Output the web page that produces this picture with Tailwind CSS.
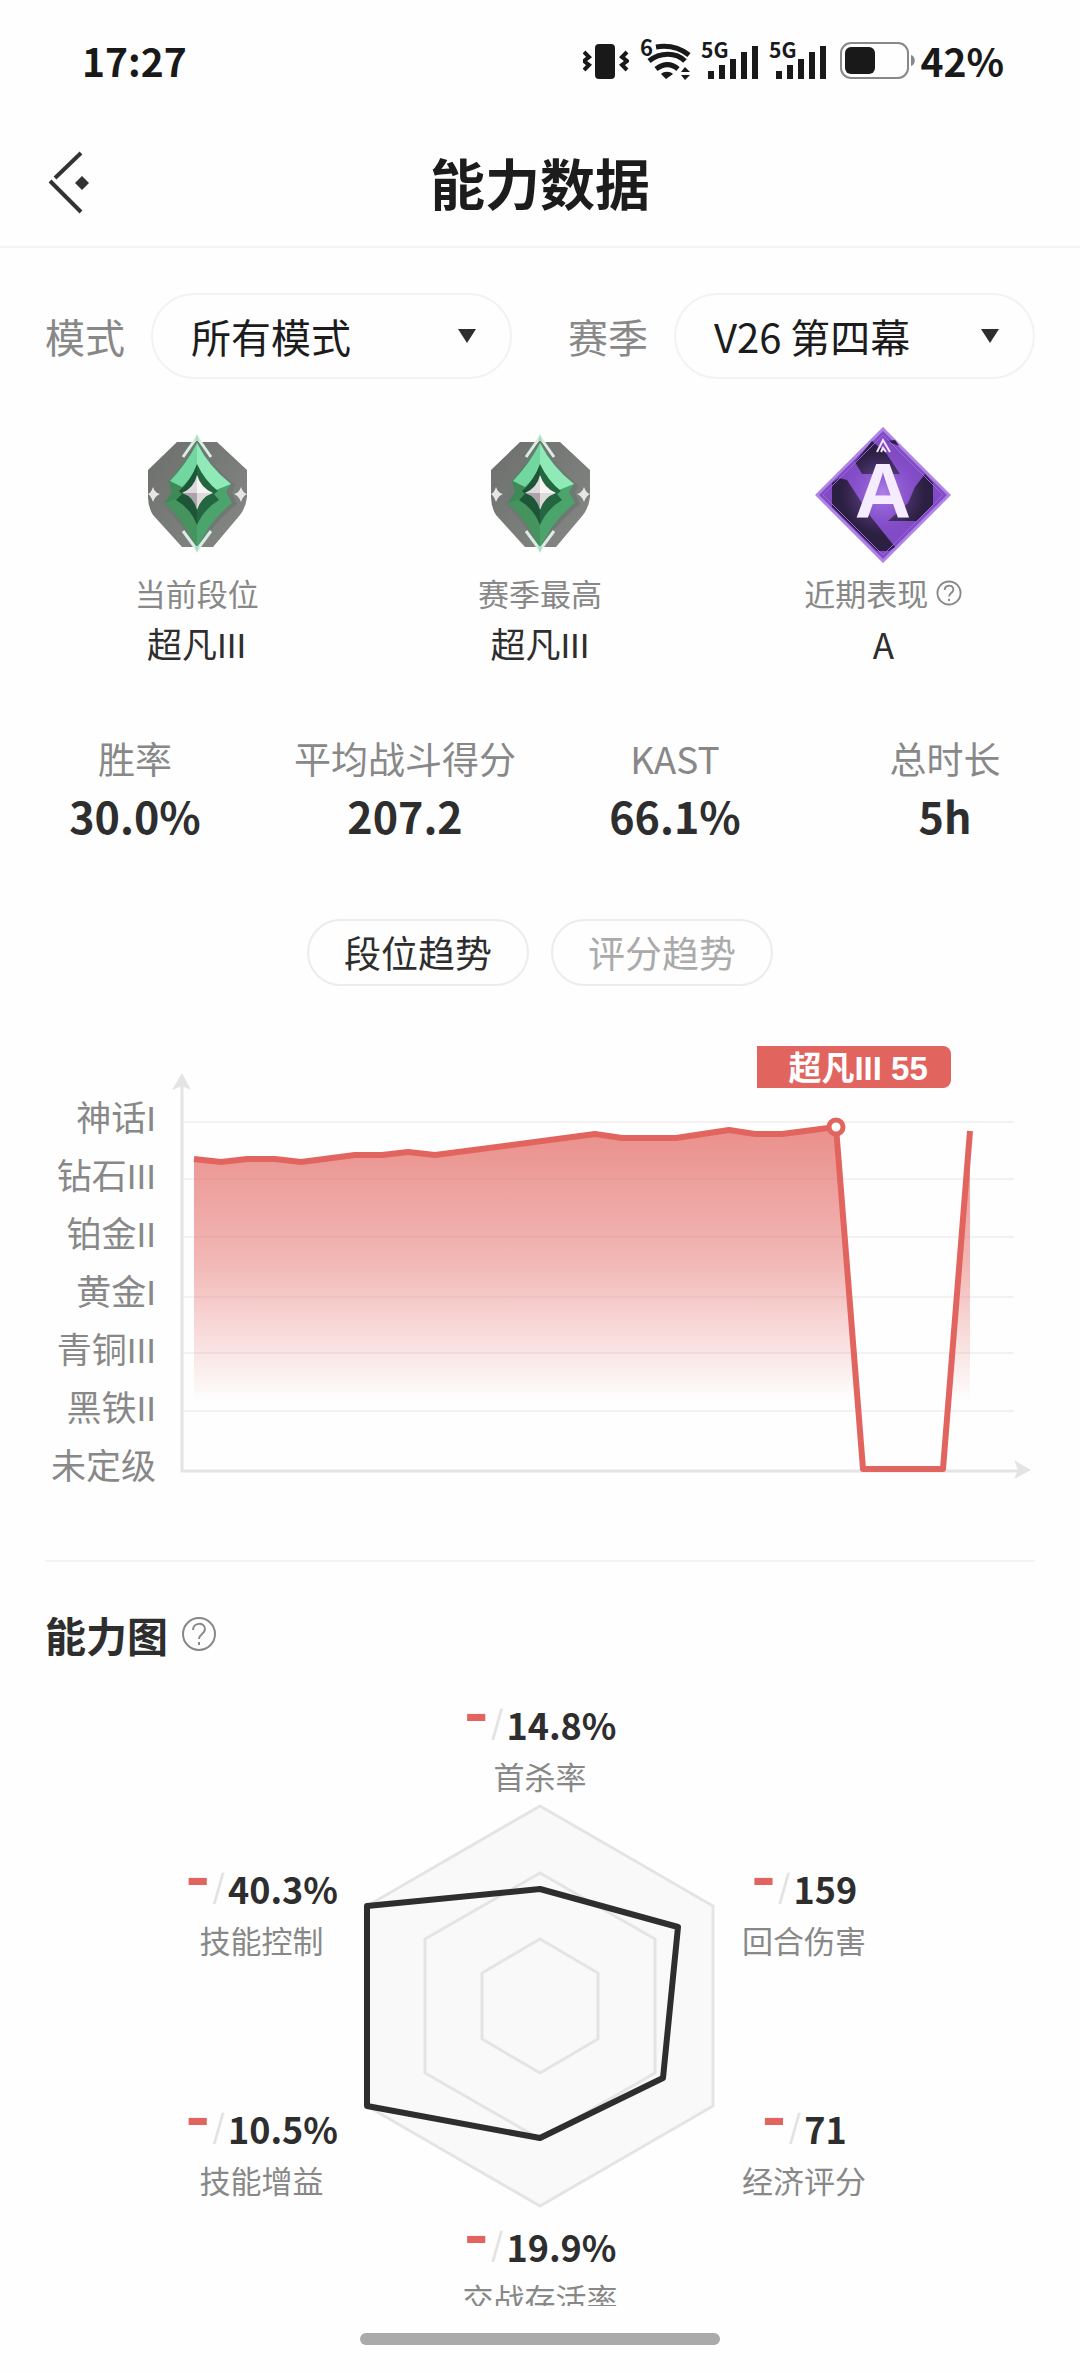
<!DOCTYPE html>
<html lang="zh-CN">

<head>
    <meta charset="UTF-8">
    <meta name="viewport" content="width=device-width, initial-scale=1.0">
    <title>能力数据</title>
    <script src="https://cdn.jsdelivr.net/npm/@tailwindcss/browser@4"></script>
</head>

<body class="h-screen flex flex-col bg-[#fefefe] text-[#2e2e2e] font-['Noto_Sans_CJK_SC',sans-serif]">
    <!-- Status bar -->
    <div class="h-[120px] shrink-0 pl-[82px] pr-[76px] flex items-center justify-between text-[#191919] text-[39px] font-bold">
        <div>17:27</div>
        <div class="flex items-center">
            <svg class="w-[46px] h-[44px] mr-[10px]" viewBox="587 38 46 44" fill="#191919">
                <rect x="599" y="44" width="20" height="35" rx="4" />
                <path d="M588 52l5 5-5 4 5 4-5 5M631 52l-5 5 5 4-5 4 5 5" fill="none" stroke="#191919" stroke-width="4" />
            </svg>
            <svg class="w-[52px] h-[60px] mr-[9px]" viewBox="642 30 52 60" fill="none" stroke="#191919" stroke-width="5">
                <text x="643" y="56" font-size="22" fill="#191919" stroke="none">6</text>
                <path d="M659 47c12-2 24 1 33 8M652 61c11-9 27-9 36 0M659 69c8-6 15-6 22 0" />
                <path d="M664 74c3-3 9-3 12 0l-7 5zM684 72l4-5 5 5zM684 75l4 5 5-5z" fill="#191919" stroke="none" />
            </svg>
            <svg class="w-[60px] h-[60px] mr-[8px]" viewBox="703 30 60 60" fill="#191919">
                <text x="704" y="58" font-size="21">5G</text>
                <path d="M711 71h6v8h-6zM722 65h6v14h-6zM733 59h6v20h-6zM744 52h6v27h-6zM755 46h6v33h-6z" />
            </svg>
            <svg class="w-[60px] h-[60px] mr-[12px]" viewBox="703 30 60 60" fill="#191919">
                <text x="704" y="58" font-size="21">5G</text>
                <path d="M711 71h6v8h-6zM722 65h6v14h-6zM733 59h6v20h-6zM744 52h6v27h-6zM755 46h6v33h-6z" />
            </svg>
            <svg class="w-[76px] h-[44px]" viewBox="844 38 76 44">
                <rect x="845" y="43" width="67" height="35" rx="10" fill="none" stroke="#888" stroke-width="2" />
                <rect x="849" y="47" width="30" height="27" rx="6" fill="#191919" />
                <path d="M915 55c5 1 5 10 0 11z" fill="#888" />
            </svg>
            <div class="ml-1">42%</div>
        </div>
    </div>

    <!-- Header -->
    <header class="h-[128px] shrink-0 px-[44px] grid grid-cols-[1fr_auto_1fr] items-center border-b-2 border-[#f5f5f5]">
        <button type="button" aria-label="返回" class="justify-self-start">
            <svg class="w-[48px] h-[64px]" viewBox="44 151 48 64" fill="none" stroke="#333" stroke-width="4">
                <path d="M81 153L55 178M50 181L81 212" />
                <path d="M82 176l7 7-7 7-7-7z" fill="#333" stroke="none" />
            </svg>
        </button>
        <h1 class="pb-1 text-[55px] font-bold text-[#1c1c1c]">能力数据</h1>
    </header>

    <main class="flex-1 min-h-0 overflow-y-auto [scrollbar-width:none] pt-[45px]">
        <!-- Filters -->
        <div class="flex gap-14 px-[45px] text-[40px]">
            <div class="flex-1 flex items-center gap-[26px]">
                <label for="mode" class="text-[#888]">模式</label>
                <div class="relative flex-1">
                    <select id="mode" class="appearance-none w-full h-[86px] pl-[38px] rounded-full border-2 border-[#f2f2f2] text-[#1c1c1c]">
                        <option>所有模式</option>
                    </select>
                    <svg class="absolute right-[36px] top-[36px] w-[18px] h-[14px] pointer-events-none" viewBox="0 0 18 14">
                        <path d="M0 0h18L9 14z" fill="#2e2e2e" />
                    </svg>
                </div>
            </div>
            <div class="flex-1 flex items-center gap-[26px]">
                <label for="season" class="text-[#888]">赛季</label>
                <div class="relative flex-1">
                    <select id="season" class="appearance-none w-full h-[86px] pl-[38px] rounded-full border-2 border-[#f2f2f2] text-[#1c1c1c]">
                        <option>V26 第四幕</option>
                    </select>
                    <svg class="absolute right-[36px] top-[36px] w-[18px] h-[14px] pointer-events-none" viewBox="0 0 18 14">
                        <path d="M0 0h18L9 14z" fill="#2e2e2e" />
                    </svg>
                </div>
            </div>
        </div>

        <!-- Ranks -->
        <div class="mt-12 px-[25px] grid grid-cols-3 text-center">
            <div>
                <svg class="w-[136px] h-[136px] mx-auto" viewBox="0 0 136 136">
                    <defs>
                        <linearGradient id="shield" x1="0" y1="0" x2="1" y2="1">
                            <stop offset="0" stop-color="#6d6f6d" />
                            <stop offset="1" stop-color="#868886" />
                        </linearGradient>
                        <g id="rank">
                            <path d="M48 15H88L118 43V70Q117 80 111 88L84 120H53L24 88Q19 80 19 70V43Z" fill="url(#shield)" />
                            <path d="M68 12Q84 40 106 58L103 66L108 77Q84 96 68 124Q53 96 33 77L37 66L35 55Q54 38 68 12Z" fill="#6f7872" />
                            <path d="M68 16Q54 40 40 54L43 65L36 76Q54 92 68 121Z" fill="#3d8a56" />
                            <path d="M68 16Q82 42 102 57L97 65L103 76Q82 92 68 121Z" fill="#4aa46c" />
                            <path d="M68 16Q58 36 41 54L53 60Q62 52 68 38Z" fill="#72d6a0" />
                            <path d="M68 16Q80 40 102 57L87 63Q74 54 68 38Z" fill="#8feab8" />
                            <path d="M36 76L48 72Q62 82 68 98V121Q54 92 36 76Z" fill="#46945d" />
                            <path d="M68 37Q62 54 50 64L53 67L47 73Q62 82 68 98Z" fill="#1c5636" />
                            <path d="M68 37Q76 54 89 64L85 67L90 73Q75 82 68 98Z" fill="#246641" />
                            <path d="M68 48Q65 61 53 66H68Z" fill="#ddd8dc" />
                            <path d="M68 48Q72 61 84 66H68Z" fill="#f7f5f3" />
                            <path d="M53 66Q65 70 68 83V66Z" fill="#aaa3a9" />
                            <path d="M84 66Q72 70 68 83V66Z" fill="#dedada" />
                            <path d="M54 30L68 10L82 30M54 104L68 123L82 104" fill="none" stroke="#d9eee3" stroke-width="3" />
                            <path d="M66 14L68 7L70 14ZM66 119L68 126L70 119Z" fill="#a8dcc8" />
                            <path d="M24 60Q26 66 31 67Q26 69 24 75Q22 69 19 67Q22 66 24 60ZM112 60Q114 66 118 67Q114 69 112 75Q110 69 105 67Q110 66 112 60Z" fill="#e8e6e4" />
                        </g>
                    </defs>
                    <use href="#rank" />
                </svg>
                <div class="mt-2 text-[31px] leading-[44px] text-[#888]">当前段位</div>
                <div class="font-['Liberation_Sans','Noto_Sans_CJK_SC',sans-serif] text-[35px] leading-[62px]">超凡III</div>
            </div>
            <div>
                <svg class="w-[136px] h-[136px] mx-auto" viewBox="0 0 136 136">
                    <use href="#rank" />
                </svg>
                <div class="mt-2 text-[31px] leading-[44px] text-[#888]">赛季最高</div>
                <div class="font-['Liberation_Sans','Noto_Sans_CJK_SC',sans-serif] text-[35px] leading-[62px]">超凡III</div>
            </div>
            <div>
                <svg class="w-[136px] h-[136px] mx-auto" viewBox="0 0 136 136">
                    <defs>
                        <radialGradient id="glow">
                            <stop offset="0" stop-color="#c9a4ff" stop-opacity="0.6" />
                            <stop offset="1" stop-color="#8a50d0" stop-opacity="0" />
                        </radialGradient>
                    </defs>
                    <path d="M68 2L134 68L68 134L2 68Z" fill="#814bc6" stroke="#b084e6" stroke-width="3" />
                    <path d="M40 35L57 14L71 26L85 47H47ZM72 14L80 13L84 19ZM17 56L24 51L32 53L56 90L80 120L74 124H62L17 80ZM110 47L118 56V78L102 94H73L93 76L100 60Z" fill="#2c2042" />
                    <path d="M68 8L128 68L68 128L8 68Z" fill="none" stroke="#9b66dc" stroke-width="1" />
                    <circle cx="68" cy="66" r="42" fill="url(#glow)" />
                    <path d="M62 25L68 13L75 25M66 25L68 21L71 25" fill="none" stroke="#f1e8ff" stroke-width="2" />
                    <text x="68" y="91" text-anchor="middle" font-family="Liberation Sans" font-size="78" font-weight="700" fill="#f5edff">A</text>
                </svg>
                <div class="mt-2 flex items-center justify-center gap-[8px] text-[31px] leading-[44px] text-[#888]">
                    近期表现
                    <button type="button" aria-label="近期表现说明">
                        <svg class="w-[26px] h-[26px]" viewBox="0 0 36 36" fill="none" stroke="#888" stroke-width="2.6">
                            <circle cx="18" cy="18" r="16" />
                            <path d="M12 14c0-8 12-8 12-1 0 5-6 5-6 10M18 26v3" />
                        </svg>
                    </button>
                </div>
                <div class="text-[35px] leading-[58px]">A</div>
            </div>
        </div>

        <!-- Totals -->
        <dl class="mt-[55px] grid grid-cols-4 text-center">
            <div>
                <dt class="text-[37px] leading-[52px] text-[#888]">胜率</dt>
                <dd class="text-[43px] leading-[62px] font-bold">30.0%</dd>
            </div>
            <div>
                <dt class="text-[37px] leading-[52px] text-[#888]">平均战斗得分</dt>
                <dd class="text-[43px] leading-[62px] font-bold">207.2</dd>
            </div>
            <div>
                <dt class="text-[37px] leading-[52px] text-[#888]">KAST</dt>
                <dd class="text-[43px] leading-[62px] font-bold">66.1%</dd>
            </div>
            <div>
                <dt class="text-[37px] leading-[52px] text-[#888]">总时长</dt>
                <dd class="text-[43px] leading-[62px] font-bold">5h</dd>
            </div>
        </dl>

        <!-- Trend tabs -->
        <div class="mt-[73px] flex justify-center gap-[22px] text-[37px]">
            <button type="button" class="w-[222px] h-[67px] rounded-full border-2 border-[#ececec]">段位趋势</button>
            <button type="button" class="w-[222px] h-[67px] rounded-full border-2 border-[#ececec] text-[#aaa]">评分趋势</button>
        </div>

        <!-- Rank trend chart -->
        <div class="mt-[60px] px-[45px] flex gap-[9px]">
            <div class="w-[111px] pt-[44px] text-right font-['Liberation_Sans','Noto_Sans_CJK_SC',sans-serif] text-[35px] leading-[58px] text-[#888] whitespace-nowrap">
                <div>神话I</div>
                <div>钻石III</div>
                <div>铂金II</div>
                <div>黄金I</div>
                <div>青铜III</div>
                <div>黑铁II</div>
                <div>未定级</div>
            </div>
            <div class="relative flex-1">
                <svg class="w-full" viewBox="165 1046 870 450" fill="none">
                    <defs>
                        <linearGradient id="area" gradientUnits="userSpaceOnUse" x1="0" y1="1127" x2="0" y2="1402">
                            <stop offset="0" stop-color="#e2645f" stop-opacity="0.72" />
                            <stop offset="0.5" stop-color="#e2645f" stop-opacity="0.45" />
                            <stop offset="1" stop-color="#e2645f" stop-opacity="0" />
                        </linearGradient>
                    </defs>
                    <path d="M182 1122H1014M182 1179H1014M182 1237H1014M182 1297H1014M182 1353H1014M182 1411H1014" stroke="#f2f2f2" stroke-width="2" />
                    <path d="M182 1082V1471H1018" stroke="#e4e4e4" stroke-width="3" />
                    <path d="M182 1073L191 1090L182 1086L172 1090ZM1031 1470L1014 1479L1018 1470L1014 1460Z" fill="#e4e4e4" />
                    <path d="M194 1159L221 1162L247 1159H275L301 1162L355 1155H382L408 1152L435 1155L595 1134L622 1138H676L729 1130L755 1134H782L836 1127L863 1469H943L970 1131V1469H194Z" fill="url(#area)" />
                    <path d="M194 1159L221 1162L247 1159H275L301 1162L355 1155H382L408 1152L435 1155L595 1134L622 1138H676L729 1130L755 1134H782L836 1127L863 1469H943L970 1131" stroke="#e2645f" stroke-width="6" stroke-linejoin="round" />
                    <circle cx="836" cy="1127" r="7" fill="#fff" stroke="#e2645f" stroke-width="5" />
                </svg>
                <div class="absolute top-0 left-[68%] w-[194px] h-[42px] pt-[3px] pl-[9px] flex items-center justify-center bg-[#e2645f] rounded-r-lg font-['Liberation_Sans','Noto_Sans_CJK_SC',sans-serif] text-white text-[33px] font-bold">超凡III 55</div>
            </div>
        </div>

        <!-- Ability radar -->
        <section class="mt-[64px] mx-[45px] border-t-2 border-[#f3f3f3] pt-[44px]">
            <h2 class="flex items-center gap-[13px] text-[41px] leading-[56px] font-bold">
                能力图
                <button type="button" aria-label="能力图说明">
                    <svg class="w-[36px] h-[36px]" viewBox="0 0 36 36" fill="none" stroke="#888" stroke-width="2">
                        <circle cx="18" cy="18" r="16" />
                        <path d="M12 14c0-8 12-8 12-1 0 5-6 5-6 10M18 26v3" />
                    </svg>
                </button>
            </h2>
        </section>

        <div class="mt-9 text-center">
            <div>
                <div class="flex justify-center text-[36px] leading-[52px] font-bold">
                    <span class="mr-[2px] font-['Inter',sans-serif] text-[54px] leading-[32px] font-extrabold text-[#e2645f]">-</span>
                    <span class="mr-[3px] text-[32px] leading-[44px] font-medium text-[#e2e2e2]">/</span>
                    14.8%
                </div>
                <div class="text-[31px] leading-[52px] text-[#888]">首杀率</div>
            </div>
            <div class="mt-[2px] grid grid-cols-[1fr_352px_1fr] gap-x-[26px]">
                <div class="justify-self-end pt-[58px] flex flex-col gap-[136px]">
                    <div>
                        <div class="flex justify-center text-[36px] leading-[52px] font-bold">
                            <span class="mr-[2px] font-['Inter',sans-serif] text-[54px] leading-[32px] font-extrabold text-[#e2645f]">-</span>
                            <span class="mr-[3px] text-[32px] leading-[44px] font-medium text-[#e2e2e2]">/</span>
                            40.3%
                        </div>
                        <div class="text-[31px] leading-[52px] text-[#888]">技能控制</div>
                    </div>
                    <div>
                        <div class="flex justify-center text-[36px] leading-[52px] font-bold">
                            <span class="mr-[2px] font-['Inter',sans-serif] text-[54px] leading-[32px] font-extrabold text-[#e2645f]">-</span>
                            <span class="mr-[3px] text-[32px] leading-[44px] font-medium text-[#e2e2e2]">/</span>
                            10.5%
                        </div>
                        <div class="text-[31px] leading-[52px] text-[#888]">技能增益</div>
                    </div>
                </div>
                <svg class="w-full" viewBox="-176 -202 352 404" fill="none" stroke="#e4e4e4" stroke-width="3">
                    <path d="M0-200L173-100V100L0 200L-173 100V-100Z" fill="#f9f9f9" />
                    <path d="M0-133L115-67V67L0 133L-115 67V-67Z" />
                    <path d="M0-67L58-33V33L0 67L-58 33V-33Z" />
                    <path d="M0-117L138-79L123 72L0 132L-173 100V-100Z" stroke="#2e2e2e" stroke-width="6" stroke-linejoin="round" />
                </svg>
                <div class="justify-self-start pt-[58px] flex flex-col gap-[136px]">
                    <div>
                        <div class="flex justify-center text-[36px] leading-[52px] font-bold">
                            <span class="mr-[2px] font-['Inter',sans-serif] text-[54px] leading-[32px] font-extrabold text-[#e2645f]">-</span>
                            <span class="mr-[3px] text-[32px] leading-[44px] font-medium text-[#e2e2e2]">/</span>
                            159
                        </div>
                        <div class="text-[31px] leading-[52px] text-[#888]">回合伤害</div>
                    </div>
                    <div>
                        <div class="flex justify-center text-[36px] leading-[52px] font-bold">
                            <span class="mr-[2px] font-['Inter',sans-serif] text-[54px] leading-[32px] font-extrabold text-[#e2645f]">-</span>
                            <span class="mr-[3px] text-[32px] leading-[44px] font-medium text-[#e2e2e2]">/</span>
                            71
                        </div>
                        <div class="text-[31px] leading-[52px] text-[#888]">经济评分</div>
                    </div>
                </div>
            </div>
            <div class="mt-3">
                <div class="flex justify-center text-[36px] leading-[52px] font-bold">
                    <span class="mr-[2px] font-['Inter',sans-serif] text-[54px] leading-[32px] font-extrabold text-[#e2645f]">-</span>
                    <span class="mr-[3px] text-[32px] leading-[44px] font-medium text-[#e2e2e2]">/</span>
                    19.9%
                </div>
                <div class="text-[31px] leading-[52px] text-[#888]">交战存活率</div>
            </div>
        </div>
    </main>

    <!-- Home indicator -->
    <div class="h-[67px] shrink-0 pt-[27px]">
        <div class="w-1/3 h-[12px] mx-auto rounded-full bg-[#aaa]"></div>
    </div>
</body>

</html>
